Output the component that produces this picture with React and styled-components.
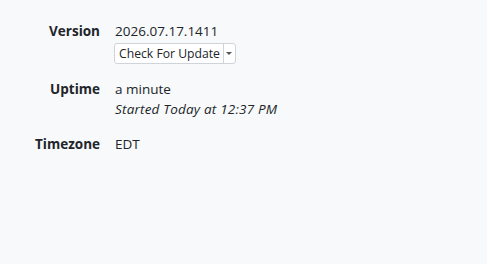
import React from 'react';
import styled, { createGlobalStyle } from 'styled-components';

const GlobalStyle = createGlobalStyle`
html, body {
  margin: 0;
  padding: 0;
  background-color: #f8f9fa;
}
body {
  font-family: "Open Sans", "Noto Sans", sans-serif;
  font-size: 13.5px;
  color: #212529;
}
`

const Page = styled.div`
width: 487px;
height: 264px;
box-sizing: border-box;
padding: 21px 0 0 0;
background-color: #f8f9fa;
`

const Row = styled.div`
display: flex;
flex-direction: row;
align-items: flex-start;
margin-bottom: 15px;
`

const Label = styled.div`
width: 100px;
text-align: right;
font-weight: 700;
line-height: 20px;
color: #212529;
`

const Value = styled.div`
margin-left: 15px;
display: flex;
flex-direction: column;
align-items: flex-start;
line-height: 20px;
`

const Line = styled.div`
line-height: 20px;
font-style: ${(p) => (p.$italic ? 'italic' : 'normal')};
letter-spacing: ${(p) => (p.$italic ? '0.2px' : '0')};
`

const SplitButton = styled.div`
display: inline-flex;
flex-direction: row;
align-items: stretch;
margin-top: 2px;
margin-left: -1px;
height: 21px;
box-sizing: border-box;
border: 1px solid #ced4da;
border-radius: 3px;
background-color: #fff;
`

const MainButton = styled.button`
font-family: inherit;
font-size: 12.2px;
color: #212529;
background: transparent;
border: none;
padding: 0 3px 0 4px;
line-height: 19px;
cursor: pointer;
`

const Caret = styled.button`
border: none;
border-left: 1px solid #ced4da;
background: transparent;
width: 12px;
padding: 0;
display: flex;
align-items: center;
justify-content: center;
cursor: pointer;
&::after {
  content: '';
  display: block;
  border-left: 3px solid transparent;
  border-right: 3px solid transparent;
  border-top: 3px solid #555;
}
`

export default function App() {
  return (
    <Page>
      <GlobalStyle />
      <Row>
        <Label>Version</Label>
        <Value>
          <Line>2026.07.17.1411</Line>
          <SplitButton>
            <MainButton>Check For Update</MainButton>
            <Caret />
          </SplitButton>
        </Value>
      </Row>
      <Row>
        <Label>Uptime</Label>
        <Value>
          <Line>a minute</Line>
          <Line $italic>Started Today at 12:37 PM</Line>
        </Value>
      </Row>
      <Row>
        <Label>Timezone</Label>
        <Value>
          <Line>EDT</Line>
        </Value>
      </Row>
    </Page>
  )
}
